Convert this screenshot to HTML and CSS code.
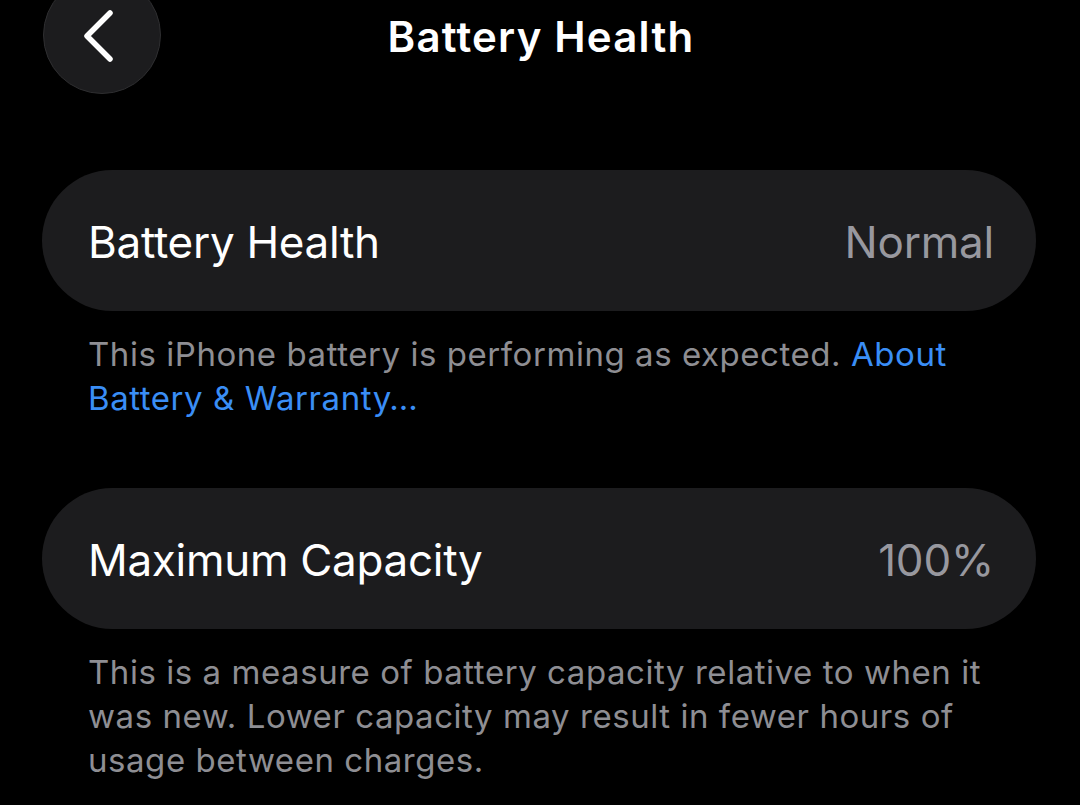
FILE: index.html
```html
<!DOCTYPE html>
<html>
<head>
<meta charset="utf-8">
<link rel="stylesheet" href="styles.css">
</head>
<body>
<div class="screen">
  <header class="nav">
    <button class="back" aria-label="Back">
      <svg width="34" height="56" viewBox="0 0 34 56"><path d="M28 5 L5 28 L28 51" fill="none" stroke="#fff" stroke-width="5.5" stroke-linecap="round" stroke-linejoin="round"/></svg>
    </button>
    <h1 class="title">Battery Health</h1>
  </header>
  <section class="group">
    <div class="card">
      <span class="label">Battery Health</span>
      <span class="value">Normal</span>
    </div>
    <p class="footer">This iPhone battery is performing as expected. <a class="link">About Battery &amp; Warranty…</a></p>
  </section>
  <section class="group">
    <div class="card">
      <span class="label">Maximum Capacity</span>
      <span class="value">100%</span>
    </div>
    <p class="footer">This is a measure of battery capacity relative to when it was new. Lower capacity may result in fewer hours of usage between charges.</p>
  </section>
</div>
</body>
</html>
```

FILE: styles.css
```css
html, body {
  margin: 0;
  padding: 0;
  background: #000;
}
body {
  font-family: Inter, "Noto Sans", sans-serif;
  color: #fff;
  overflow: hidden;
}
.screen {
  width: 1080px;
  height: 805px;
  padding: 0 44px 0 42px;
  box-sizing: border-box;
}
.nav {
  position: relative;
  height: 170px;
  display: flex;
  justify-content: center;
}
.back {
  position: absolute;
  left: 1px;
  top: -24px;
  width: 118px;
  height: 118px;
  border-radius: 50%;
  background: #1c1c1e;
  border: 1.5px solid #2e2e30;
  padding: 0;
  box-sizing: border-box;
}
.back svg {
  position: absolute;
  left: 38px;
  top: 31px;
}
.title {
  margin: 13px 0 0;
  font-size: 42px;
  font-weight: 600;
  letter-spacing: 1.2px;
  line-height: 48px;
  padding-left: 4px;
}
.group + .group {
  margin-top: 68px;
}
.card {
  height: 141px;
  border-radius: 71px;
  background: #1c1c1e;
  display: flex;
  align-items: center;
  justify-content: space-between;
  padding: 0 42px 0 46px;
}
.label {
  font-size: 44px;
  font-weight: 400;
  letter-spacing: -0.3px;
  padding-top: 2px;
}
.value {
  font-size: 44px;
  color: #98989f;
  letter-spacing: -0.2px;
  padding-top: 2px;
}
.footer {
  margin: 21px 0 0;
  padding: 0 40px 0 46px;
  font-size: 33px;
  line-height: 44px;
  color: #8e8e93;
  letter-spacing: 0.55px;
}
.link {
  color: #3a8ef6;
}
```
